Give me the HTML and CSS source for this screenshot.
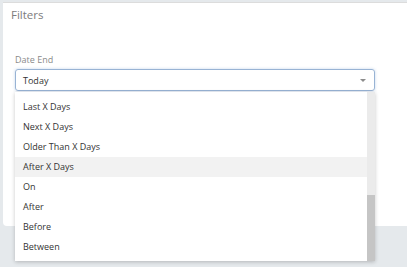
FILE: index.html
```html
<!DOCTYPE html>
<html lang="en">
<head>
  <meta charset="UTF-8">
  <title>Filters</title>
  <link rel="stylesheet" href="styles.css">
</head>
<body>

<div class="panel">
  <div class="panel-title">Filters</div>

  <div class="field">
    <label class="field-label">Date End</label>
    <div class="select">
      <span class="select-value">Today</span>
      <span class="select-arrow"></span>
    </div>

    <div class="dropdown">
      <ul class="options">
        <li>Last X Days</li>
        <li>Next X Days</li>
        <li>Older Than X Days</li>
        <li class="hover">After X Days</li>
        <li>On</li>
        <li>After</li>
        <li>Before</li>
        <li>Between</li>
      </ul>
      <div class="scrollbar">
        <div class="thumb"></div>
      </div>
    </div>
  </div>
</div>

</body>
</html>
```

FILE: styles.css
```css
body {
  margin: 0;
  background: #e5e9ec;
  font-family: "Open Sans", Arial, sans-serif;
  height: 267px;
  overflow: hidden;
}
.panel {
  margin: 2px 0 0 3px;
  height: 224px;
  background: #fff;
  border-top: 1px solid #dcdcdc;
  border-bottom-left-radius: 4px;
  padding: 4px 0 0 8px;
  box-sizing: border-box;
  position: relative;
}
.panel-title {
  font-size: 11.5px;
  color: #7d7d7d;
  line-height: 16px;
}
.field {
  margin: 31px 0 0 4px;
  width: 360px;
  position: relative;
}
.field-label {
  display: block;
  font-size: 9px;
  color: #8a8a8a;
  line-height: 12px;
  margin-bottom: 3px;
}
.select {
  height: 22px;
  border: 1px solid #98b3d4;
  border-radius: 3px;
  box-shadow: 0 0 3px rgba(120, 160, 210, 0.45);
  box-sizing: border-box;
  display: flex;
  align-items: center;
  justify-content: space-between;
  padding: 0 8px 0 7px;
}
.select-value {
  font-size: 9px;
  color: #333;
}
.select-arrow {
  width: 0;
  height: 0;
  border-left: 3px solid transparent;
  border-right: 3px solid transparent;
  border-top: 3px solid #8c8c8c;
  margin-top: 1px;
}
.dropdown {
  position: absolute;
  left: 0;
  top: 38px;
  width: 360px;
  height: 169px;
  background: #fff;
  box-shadow: 0 1px 4px rgba(0, 0, 0, 0.22);
  overflow: hidden;
  display: flex;
}
.options {
  list-style: none;
  margin: 0;
  padding: 5px 0 0 0;
  flex: 1;
}
.options li {
  height: 20px;
  line-height: 20px;
  padding-left: 8px;
  font-size: 9px;
  color: #333;
}
.options li.hover {
  background: #f2f2f2;
}
.scrollbar {
  width: 8px;
  background: #ebebeb;
  display: flex;
  flex-direction: column;
  justify-content: flex-end;
}
.thumb {
  height: 66px;
  background: #c5c5c5;
}
```
